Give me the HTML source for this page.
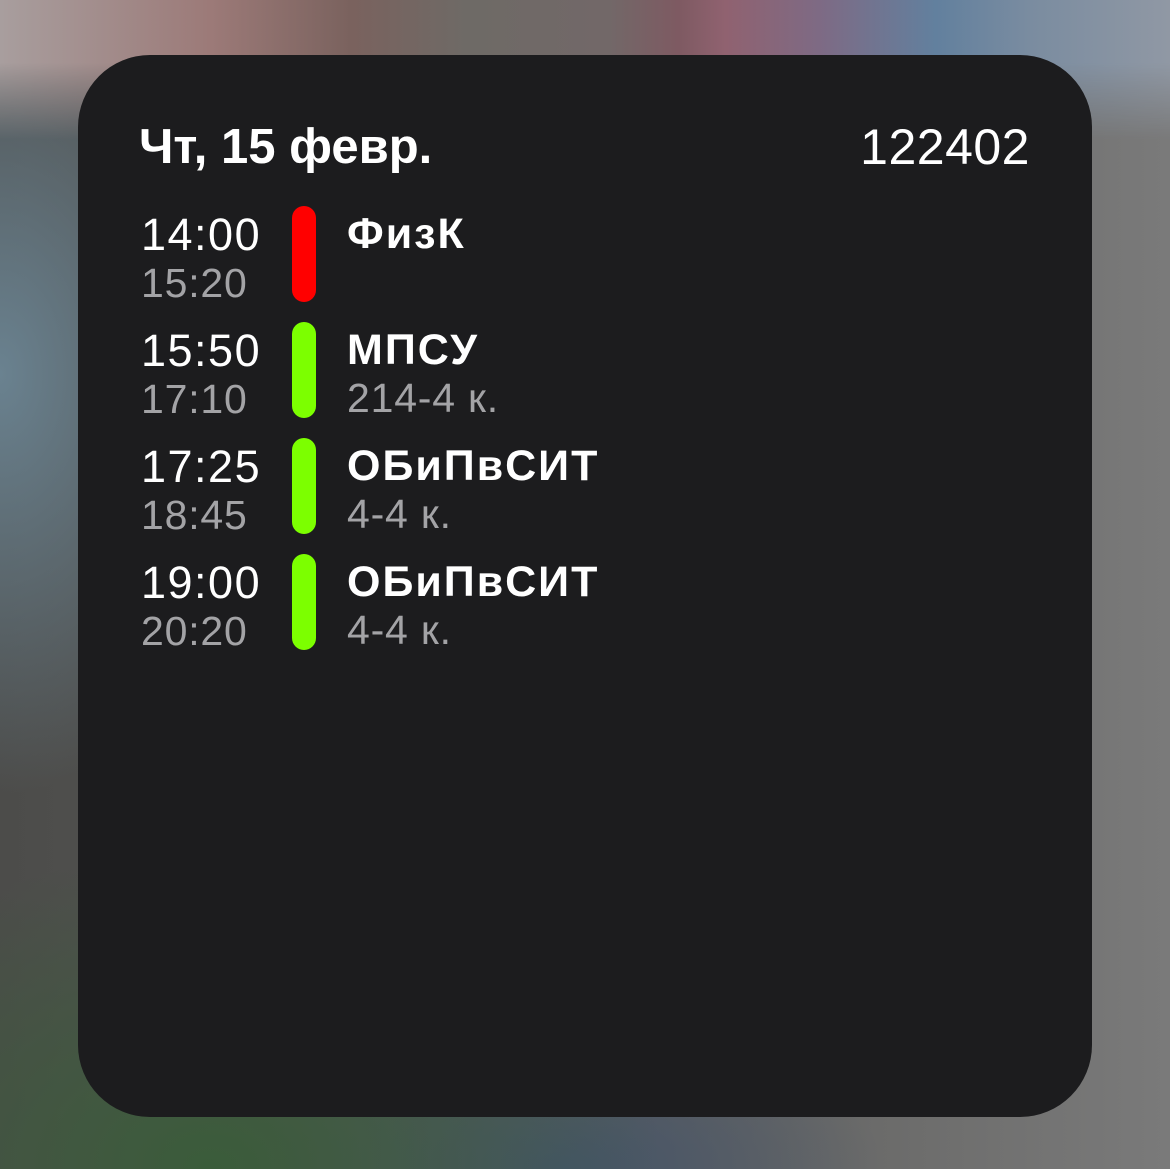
<!DOCTYPE html>
<html><head><meta charset="utf-8"><style>
html,body{margin:0;padding:0}
body{width:1170px;height:1169px;position:relative;overflow:hidden;font-family:"Liberation Sans",sans-serif;
background:
radial-gradient(ellipse 260px 420px at 0% 32%,#6a8290 0%,rgba(106,130,144,0) 100%),
radial-gradient(ellipse 450px 320px at 18% 100%,#3a5c3a 0%,rgba(58,92,58,0) 100%),
radial-gradient(ellipse 320px 160px at 48% 100%,#44546a 0%,rgba(68,84,106,0) 100%),
linear-gradient(90deg,#4c4c4a 0%,#5c5c5a 50%,#7a7a7a 100%);}
.top{position:absolute;left:0;top:0;width:1170px;height:140px;
background:linear-gradient(90deg,#a89e9e 0%,#9c7a78 18%,#7a625e 30%,#6e6a66 40%,#726868 52%,#7e5a62 58%,#906270 62%,#7e6a84 70%,#62809e 80%,#7a8ca0 88%,#9098a4 100%);
-webkit-mask-image:linear-gradient(180deg,#000 45%,transparent 100%);mask-image:linear-gradient(180deg,#000 45%,transparent 100%)}
.card{position:absolute;left:78px;top:55px;width:1014px;height:1062px;border-radius:72px;background:#1c1c1e}
.t{position:absolute;line-height:1;white-space:nowrap;color:#fff}
.h{font-size:49px;font-weight:bold;top:123px}
.tm{font-size:45px;left:141px;letter-spacing:1.5px}
.ts{font-size:41px;left:141px;color:#a3a3a6;letter-spacing:0.8px}
.ti{font-size:43px;font-weight:bold;left:347px;letter-spacing:2px}
.su{font-size:41px;left:347px;color:#a3a3a6;letter-spacing:0.8px}
.bar{position:absolute;left:292px;width:24px;height:96px;border-radius:12px;background:#7cff00}
</style></head><body>
<div class="top"></div>
<div class="card"></div>
<div class="t h" style="left:139px">Чт, 15 февр.</div>
<div class="t" style="font-size:50px;top:122px;right:140px;letter-spacing:0.5px">122402</div>

<div class="t tm" style="top:212px">14:00</div>
<div class="t ts" style="top:263px">15:20</div>
<div class="bar" style="top:206px;background:#ff0000"></div>
<div class="t ti" style="top:213px">ФизК</div>

<div class="t tm" style="top:328px">15:50</div>
<div class="t ts" style="top:379px">17:10</div>
<div class="bar" style="top:322px"></div>
<div class="t ti" style="top:329px">МПСУ</div>
<div class="t su" style="top:378px">214-4 к.</div>

<div class="t tm" style="top:444px">17:25</div>
<div class="t ts" style="top:495px">18:45</div>
<div class="bar" style="top:438px"></div>
<div class="t ti" style="top:445px">ОБиПвСИТ</div>
<div class="t su" style="top:494px">4-4 к.</div>

<div class="t tm" style="top:560px">19:00</div>
<div class="t ts" style="top:611px">20:20</div>
<div class="bar" style="top:554px"></div>
<div class="t ti" style="top:561px">ОБиПвСИТ</div>
<div class="t su" style="top:610px">4-4 к.</div>
</body></html>
